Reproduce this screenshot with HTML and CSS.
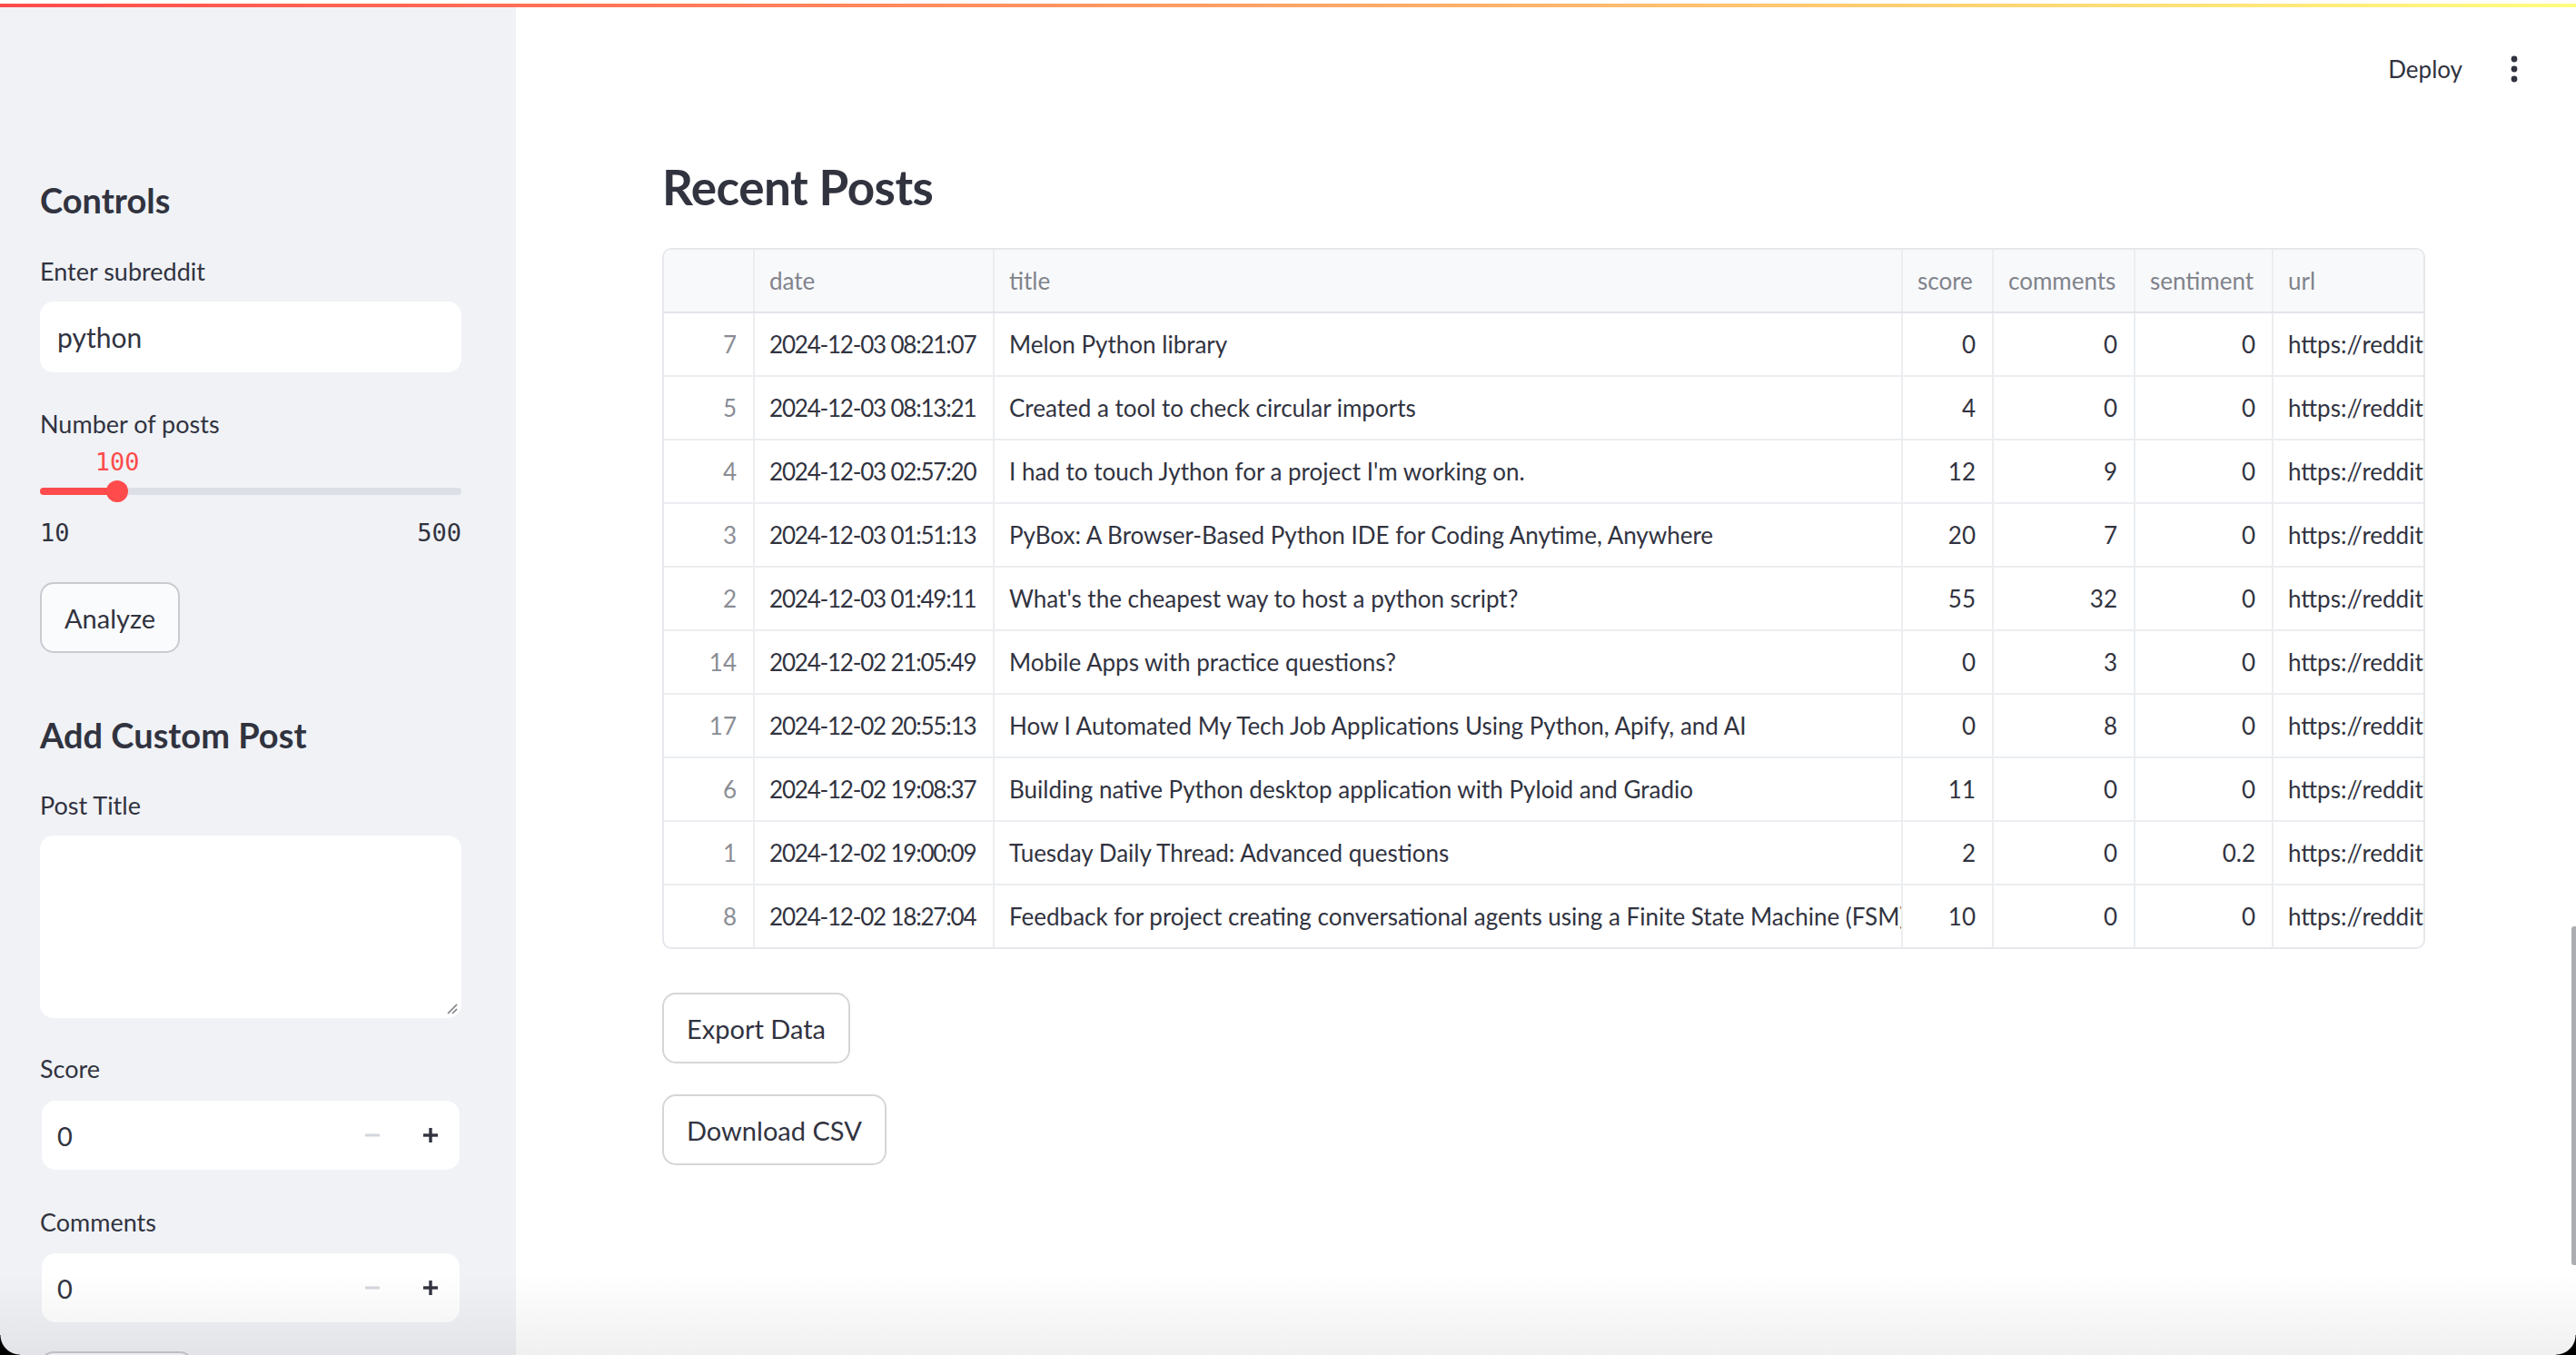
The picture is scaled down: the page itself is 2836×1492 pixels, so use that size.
FILE: index.html
```html
<!DOCTYPE html>
<html lang="en">
<head>
<meta charset="utf-8">
<title>Reddit Analyzer</title>
<link rel="stylesheet" href="styles.css">
</head>
<body>
<div class="decoration"></div>
<div class="app">
  <aside class="sidebar">
    <h2 class="side-heading">Controls</h2>
    <label class="label">Enter subreddit</label>
    <div class="text-input">python</div>

    <label class="label label-slider">Number of posts</label>
    <div class="slider">
      <div class="slider-value-row">
        <span class="slider-value" style="left:18.37%">100</span>
      </div>
      <div class="slider-track-row">
        <div class="slider-track">
          <div class="slider-fill" style="width:18.37%"></div>
        </div>
        <div class="slider-thumb" style="left:18.37%"></div>
      </div>
      <div class="slider-range"><span>10</span><span>500</span></div>
    </div>
    <button class="btn side-btn">Analyze</button>

    <h2 class="side-heading heading-custom">Add Custom Post</h2>
    <label class="label label-post">Post Title</label>
    <div class="textarea">
      <svg class="resize" width="14" height="14" viewBox="0 0 14 14"><path d="M13 3 L3 13 M13 8 L8 13" stroke="#7b7d84" stroke-width="1.6" fill="none"/></svg>
    </div>

    <label class="label label-score">Score</label>
    <div class="number-input">
      <span class="num-value">0</span>
      <div class="num-btns">
        <span class="num-btn"><svg width="16" height="16" viewBox="0 0 16 16"><rect x="0" y="6.5" width="16" height="3" fill="#d3d6dc"/></svg></span>
        <span class="num-btn"><svg width="16" height="16" viewBox="0 0 16 16"><rect x="0" y="6.3" width="16" height="3.4" fill="#31333f"/><rect x="6.3" y="0" width="3.4" height="16" fill="#31333f"/></svg></span>
      </div>
    </div>

    <label class="label label-comments">Comments</label>
    <div class="number-input num-comments">
      <span class="num-value">0</span>
      <div class="num-btns">
        <span class="num-btn"><svg width="16" height="16" viewBox="0 0 16 16"><rect x="0" y="6.5" width="16" height="3" fill="#d3d6dc"/></svg></span>
        <span class="num-btn"><svg width="16" height="16" viewBox="0 0 16 16"><rect x="0" y="6.3" width="16" height="3.4" fill="#31333f"/><rect x="6.3" y="0" width="3.4" height="16" fill="#31333f"/></svg></span>
      </div>
    </div>
    <button class="btn side-btn add-btn">Add Post</button>
  </aside>

  <main class="main">
    <header class="topbar">
      <span class="deploy">Deploy</span>
      <svg class="menu" width="8" height="30" viewBox="0 0 8 30"><circle cx="4" cy="4" r="3.4" fill="#31333f"/><circle cx="4" cy="15" r="3.4" fill="#31333f"/><circle cx="4" cy="26" r="3.4" fill="#31333f"/></svg>
    </header>

    <h1 class="page-heading">Recent Posts</h1>

    <div class="table">
      <div class="tr th">
        <div class="cell"></div>
        <div class="cell">date</div>
        <div class="cell">title</div>
        <div class="cell">score</div>
        <div class="cell">comments</div>
        <div class="cell">sentiment</div>
        <div class="cell">url</div>
      </div>
      <div class="tr"><div class="cell idx">7</div><div class="cell date">2024-12-03 08:21:07</div><div class="cell">Melon Python library</div><div class="cell num">0</div><div class="cell num">0</div><div class="cell num">0</div><div class="cell">https://reddit.com/r/Python/comments/1h5h3xk/</div></div>
      <div class="tr"><div class="cell idx">5</div><div class="cell date">2024-12-03 08:13:21</div><div class="cell">Created a tool to check circular imports</div><div class="cell num">4</div><div class="cell num">0</div><div class="cell num">0</div><div class="cell">https://reddit.com/r/Python/comments/1h5gz2a/</div></div>
      <div class="tr"><div class="cell idx">4</div><div class="cell date">2024-12-03 02:57:20</div><div class="cell">I had to touch Jython for a project I'm working on.</div><div class="cell num">12</div><div class="cell num">9</div><div class="cell num">0</div><div class="cell">https://reddit.com/r/Python/comments/1h5a8ut/</div></div>
      <div class="tr"><div class="cell idx">3</div><div class="cell date">2024-12-03 01:51:13</div><div class="cell">PyBox: A Browser-Based Python IDE for Coding Anytime, Anywhere</div><div class="cell num">20</div><div class="cell num">7</div><div class="cell num">0</div><div class="cell">https://reddit.com/r/Python/comments/1h592b7/</div></div>
      <div class="tr"><div class="cell idx">2</div><div class="cell date">2024-12-03 01:49:11</div><div class="cell">What's the cheapest way to host a python script?</div><div class="cell num">55</div><div class="cell num">32</div><div class="cell num">0</div><div class="cell">https://reddit.com/r/Python/comments/1h590n4/</div></div>
      <div class="tr"><div class="cell idx">14</div><div class="cell date">2024-12-02 21:05:49</div><div class="cell">Mobile Apps with practice questions?</div><div class="cell num">0</div><div class="cell num">3</div><div class="cell num">0</div><div class="cell">https://reddit.com/r/Python/comments/1h51kq3/</div></div>
      <div class="tr"><div class="cell idx">17</div><div class="cell date">2024-12-02 20:55:13</div><div class="cell">How I Automated My Tech Job Applications Using Python, Apify, and AI</div><div class="cell num">0</div><div class="cell num">8</div><div class="cell num">0</div><div class="cell">https://reddit.com/r/Python/comments/1h51dz8/</div></div>
      <div class="tr"><div class="cell idx">6</div><div class="cell date">2024-12-02 19:08:37</div><div class="cell">Building native Python desktop application with Pyloid and Gradio</div><div class="cell num">11</div><div class="cell num">0</div><div class="cell num">0</div><div class="cell">https://reddit.com/r/Python/comments/1h4yv0c/</div></div>
      <div class="tr"><div class="cell idx">1</div><div class="cell date">2024-12-02 19:00:09</div><div class="cell">Tuesday Daily Thread: Advanced questions</div><div class="cell num">2</div><div class="cell num">0</div><div class="cell num">0.2</div><div class="cell">https://reddit.com/r/Python/comments/1h4yo7h/</div></div>
      <div class="tr"><div class="cell idx">8</div><div class="cell date">2024-12-02 18:27:04</div><div class="cell">Feedback for project creating conversational agents using a Finite State Machine (FSM)</div><div class="cell num">10</div><div class="cell num">0</div><div class="cell num">0</div><div class="cell">https://reddit.com/r/Python/comments/1h4xw6e/</div></div>
    </div>

    <div class="actions">
      <button class="btn">Export Data</button>
      <button class="btn">Download CSV</button>
    </div>
  </main>
</div>
<div class="scrollbar"></div>
<div class="bottom-shade"></div>
<div class="corner corner-left"></div>
<div class="corner corner-right"></div>
</body>
</html>
```
FILE: styles.css
```css
* { box-sizing: border-box; }

body {
  margin: 0;
  width: 2836px;
  height: 1492px;
  overflow: hidden;
  position: relative;
  background: #ffffff;
  color: #31333f;
  font-family: Lato, "Source Sans Pro", "Noto Sans", sans-serif;
}

.decoration {
  position: absolute;
  top: 0;
  left: 0;
  right: 0;
  height: 8px;
  border-top: 4px solid #ffffff;
  background: linear-gradient(90deg, #ff4b4b, #fffd80);
  z-index: 5;
}

.app {
  display: flex;
  height: 1492px;
}

/* ---------- Sidebar ---------- */
.sidebar {
  width: 568px;
  flex: none;
  background: #f0f2f6;
  padding: 195px 60px 0 44px;
  display: flex;
  flex-direction: column;
  overflow: hidden;
}

.sidebar > * { flex: none; }

.side-heading {
  margin: 0;
  font-size: 38px;
  line-height: 50px;
  font-weight: 700;
  color: #31333f;
}

.heading-custom { margin-top: 65px; }

.label {
  display: block;
  margin-top: 37px;
  font-size: 27px;
  line-height: 34px;
  color: #31333f;
}

.label-slider { margin-top: 40px; }
.label-post { margin-top: 36px; }
.label-score { margin-top: 39px; }
.label-comments { margin-top: 41px; }

.text-input {
  margin-top: 16px;
  height: 78px;
  background: #ffffff;
  border-radius: 15px;
  padding: 0 19px;
  display: flex;
  align-items: center;
  font-size: 30px;
  color: #31333f;
}

.slider { display: flex; flex-direction: column; }

.slider-value-row {
  position: relative;
  margin-top: 10px;
  height: 30px;
}

.slider-value {
  position: absolute;
  top: 0;
  transform: translateX(-50%);
  font-family: "DejaVu Sans Mono", monospace;
  font-size: 27px;
  line-height: 30px;
  color: #ff4b4b;
}

.slider-track-row {
  position: relative;
  margin-top: 5px;
  height: 24px;
  display: flex;
  align-items: center;
}

.slider-track {
  width: 100%;
  height: 8px;
  border-radius: 4px;
  background: #dcdfe5;
  overflow: hidden;
}

.slider-fill {
  height: 100%;
  background: #ff4b4b;
}

.slider-thumb {
  position: absolute;
  top: 0;
  width: 24px;
  height: 24px;
  margin-left: -12px;
  border-radius: 50%;
  background: #ff4b4b;
}

.slider-range {
  margin-top: 19px;
  display: flex;
  justify-content: space-between;
  font-family: "DejaVu Sans Mono", monospace;
  font-size: 27px;
  line-height: 30px;
  color: #31333f;
}

.btn {
  display: inline-flex;
  align-items: center;
  height: 78px;
  padding: 0 25px;
  border: 2px solid #d5d6d9;
  border-radius: 15px;
  background: #ffffff;
  color: #31333f;
  font-family: inherit;
  font-size: 29px;
  cursor: pointer;
  align-self: flex-start;
}

.side-btn {
  margin-top: 39px;
  background: #fafbfc;
  border-color: #c9cbd1;
}

.add-btn { margin-top: 32px; }

.textarea {
  position: relative;
  margin-top: 16px;
  height: 201px;
  background: #ffffff;
  border-radius: 15px;
}

.resize {
  position: absolute;
  right: 4px;
  bottom: 4px;
}

.number-input {
  margin: 18px 2px 0;
  height: 76px;
  background: #ffffff;
  border-radius: 15px;
  display: flex;
  align-items: center;
  justify-content: space-between;
  padding-left: 17px;
}

.num-comments { margin-top: 17px; }

.num-value {
  font-size: 29px;
  color: #31333f;
}

.num-btns { display: flex; height: 100%; }

.num-btn {
  width: 64px;
  height: 100%;
  display: flex;
  align-items: center;
  justify-content: center;
}

/* ---------- Main ---------- */
.main {
  flex: 1;
  display: flex;
  flex-direction: column;
  align-items: flex-start;
  padding: 0 166px 0 161px;
  min-width: 0;
}

.main > * { flex: none; }

.topbar {
  align-self: stretch;
  height: 152px;
  margin-right: -102px;
  display: flex;
  align-items: center;
  justify-content: flex-end;
  gap: 53px;
}

.deploy {
  font-size: 26px;
  color: #31333f;
}

.page-heading {
  margin: 23px 0 0;
  font-size: 53px;
  line-height: 62px;
  font-weight: 700;
  color: #31333f;
  letter-spacing: -0.5px;
}

.table {
  margin-top: 36px;
  width: 1941px;
  border: 2px solid #e6e8ec;
  border-radius: 10px;
  overflow: hidden;
}

.tr {
  display: grid;
  grid-template-columns: 100px 264px 1000px 100px 156px 152px 400px;
  height: 70px;
  border-bottom: 2px solid #ebedf0;
}

.tr:last-child { border-bottom: none; height: 68px; }

.th {
  background: #f8f9fb;
  border-bottom-color: #e3e5ea;
}

.cell {
  display: flex;
  align-items: center;
  padding: 0 16px;
  border-right: 2px solid #ebedf0;
  white-space: nowrap;
  overflow: hidden;
  font-size: 26px;
  color: #31333f;
}

.date { letter-spacing: -1.2px; }

.th .cell { color: #81838b; }

.idx {
  justify-content: flex-end;
  padding-right: 18px;
  color: #8b8d95;
}

.num {
  justify-content: flex-end;
  padding-right: 18px;
}

.actions {
  margin-top: 48px;
  display: flex;
  flex-direction: column;
  align-items: flex-start;
  gap: 34px;
}

/* ---------- Overlays ---------- */
.scrollbar {
  position: absolute;
  right: 0;
  top: 1020px;
  width: 5px;
  height: 373px;
  border-radius: 3px 0 0 3px;
  background: #acadb1;
}

.bottom-shade {
  position: absolute;
  left: 0;
  right: 0;
  bottom: 0;
  height: 90px;
  background: linear-gradient(180deg, rgba(0,0,0,0), rgba(0,0,0,0.06));
  pointer-events: none;
}

.corner {
  position: absolute;
  bottom: 0;
  width: 22px;
  height: 22px;
}

.corner-left {
  left: 0;
  background: radial-gradient(circle at 100% 0, transparent 21px, #000 22px);
}

.corner-right {
  right: 0;
  background: radial-gradient(circle at 0 0, transparent 21px, #000 22px);
}
```
